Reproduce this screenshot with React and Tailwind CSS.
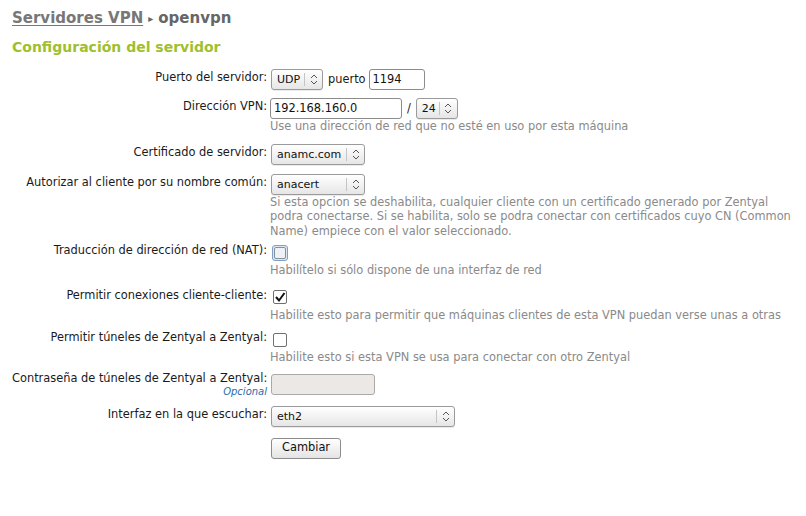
import React from "react";

const Arrows = () => (
  <svg width="8" height="11" viewBox="0 0 8 11" className="text-[#555]">
    <path d="M1 4 L4 1 L7 4" fill="none" stroke="currentColor" strokeWidth="1" />
    <path d="M1 7 L4 10 L7 7" fill="none" stroke="currentColor" strokeWidth="1" />
  </svg>
);

const Select = ({ value, width }) => (
  <div
    className="h-[21px] flex items-center rounded-[3px] border border-[#9a9a9a] bg-gradient-to-b from-white to-[#e6e6e6] text-[#111] text-[11px] shadow-[0_1px_0_rgba(0,0,0,0.08)]"
    style={{ width }}
  >
    <span className="flex-1 pl-[5px] leading-none">{value}</span>
    <span className="h-[13px] border-l border-[#c4c4c4]" />
    <span className="w-[17px] flex justify-center">
      <Arrows />
    </span>
  </div>
);

const Input = ({ value, width, disabled }) => (
  <div
    className={
      "h-[21px] flex items-center rounded-[3px] border pl-[3px] " +
      (disabled
        ? "border-[#a9a9a9] bg-[#ebe8e6]"
        : "border-[#8c8c8c] bg-white text-[#111]")
    }
    style={{ width }}
  >
    {value}
  </div>
);

const Help = ({ children }) => (
  <p className="text-[#8a8a8a] leading-[14.5px] whitespace-nowrap">{children}</p>
);

const Row = ({ label, className, children }) => (
  <div className={"flex " + (className || "")}>
    <div className="w-[258px] shrink-0 text-right pr-[3px] pt-[1px] leading-[15px] text-[#1a1a1a] whitespace-nowrap">
      {label}
    </div>
    <div className="flex flex-col">{children}</div>
  </div>
);

const Check = ({ checked, focused }) => (
  <div className="h-[21px] flex items-center">
    {focused ? (
      <div className="ml-[2px] w-[16px] h-[16px] rounded-[3px] border border-[#7f9fc8] bg-[#dfe6ef] flex items-center justify-center">
        <div className="w-[12px] h-[12px] rounded-[2px] border border-[#8a8f96] bg-[#eef1f5]" />
      </div>
    ) : (
      <div className="ml-[3px] w-[14px] h-[14px] rounded-[2px] border border-[#6f6f6f] bg-white flex items-center justify-center">
        {checked && (
          <svg width="12" height="12" viewBox="0 0 12 12">
            <path d="M2 6 L5 9.5 L10.5 2" fill="none" stroke="#111" strokeWidth="2" />
          </svg>
        )}
      </div>
    )}
  </div>
);

const App = () => {
  return (
    <div className="w-[806px] h-[516px] bg-white font-['DejaVu_Sans',sans-serif] text-[11.4px] overflow-hidden">
      <div className="pl-[12px] pt-[11px] flex items-center h-[25px] text-[15px] font-bold text-[#777]">
        <span className="underline decoration-1 underline-offset-2">Servidores VPN</span>
        <span className="text-[10px] mx-[5px] text-[#666]">▸</span>
        <span className="text-[#666]">openvpn</span>
      </div>
      <h2 className="pl-[12px] mt-[13px] text-[14px] leading-[18px] font-bold text-[#9fc02e]">
        Configuración del servidor
      </h2>

      <div className="pl-[12px] mt-[13px] flex flex-col">
        <Row label="Puerto del servidor:">
          <div className="flex items-center">
            <div className="ml-[1px]">
              <Select value="UDP" width={52} />
            </div>
            <span className="ml-[5px] mr-[3px] text-[#1a1a1a]">puerto</span>
            <Input value="1194" width={56} />
          </div>
        </Row>

        <Row label="Dirección VPN:" className="mt-[8px]">
          <div className="flex items-center">
            <Input value="192.168.160.0" width={132} />
            <span className="mx-[5px] text-[#1a1a1a]">/</span>
            <Select value="24" width={42} />
          </div>
          <Help>Use una dirección de red que no esté en uso por esta máquina</Help>
        </Row>

        <Row label="Certificado de servidor:" className="mt-[10px]">
          <div className="ml-[1px]">
            <Select value="anamc.com" width={94} />
          </div>
        </Row>

        <Row label="Autorizar al cliente por su nombre común:" className="mt-[9px]">
          <div className="ml-[1px]">
            <Select value="anacert" width={94} />
          </div>
          <Help>
            Si esta opcion se deshabilita, cualquier cliente con un certificado generado por Zentyal
            <br />
            podra conectarse. Si se habilita, solo se podra conectar con certificados cuyo CN (Common
            <br />
            Name) empiece con el valor seleccionado.
          </Help>
        </Row>

        <Row label="Traducción de dirección de red (NAT):" className="mt-[4px]">
          <Check focused />
          <Help>Habilítelo si sólo dispone de una interfaz de red</Help>
        </Row>

        <Row label="Permitir conexiones cliente-cliente:" className="mt-[9px]">
          <Check checked />
          <Help>Habilite esto para permitir que máquinas clientes de esta VPN puedan verse unas a otras</Help>
        </Row>

        <Row label="Permitir túneles de Zentyal a Zentyal:" className="mt-[7px]">
          <Check />
          <Help>Habilite esto si esta VPN se usa para conectar con otro Zentyal</Help>
        </Row>

        <div className="flex mt-[9px]">
          <div className="w-[258px] shrink-0 text-right pr-[3px] -mt-[2px] flex flex-col whitespace-nowrap">
            <span className="leading-[13px] text-[#1a1a1a]">Contraseña de túneles de Zentyal a Zentyal:</span>
            <span className="leading-[13px] text-[10px] italic text-[#2c6bb0]">Opcional</span>
          </div>
          <div className="ml-[1px]">
            <Input value="" width={104} disabled />
          </div>
        </div>

        <Row label="Interfaz en la que escuchar:" className="mt-[8px]">
          <div className="ml-[1px]">
            <Select value="eth2" width={184} />
          </div>
        </Row>

        <div className="flex mt-[11px]">
          <div className="w-[258px] shrink-0" />
          <button className="ml-[1px] w-[70px] h-[21px] rounded-[3px] border border-[#8c8c8c] bg-gradient-to-b from-white to-[#e4e4e4] text-[#111] text-[11.4px] leading-none">
            Cambiar
          </button>
        </div>
      </div>
    </div>
  );
};

export default App;
